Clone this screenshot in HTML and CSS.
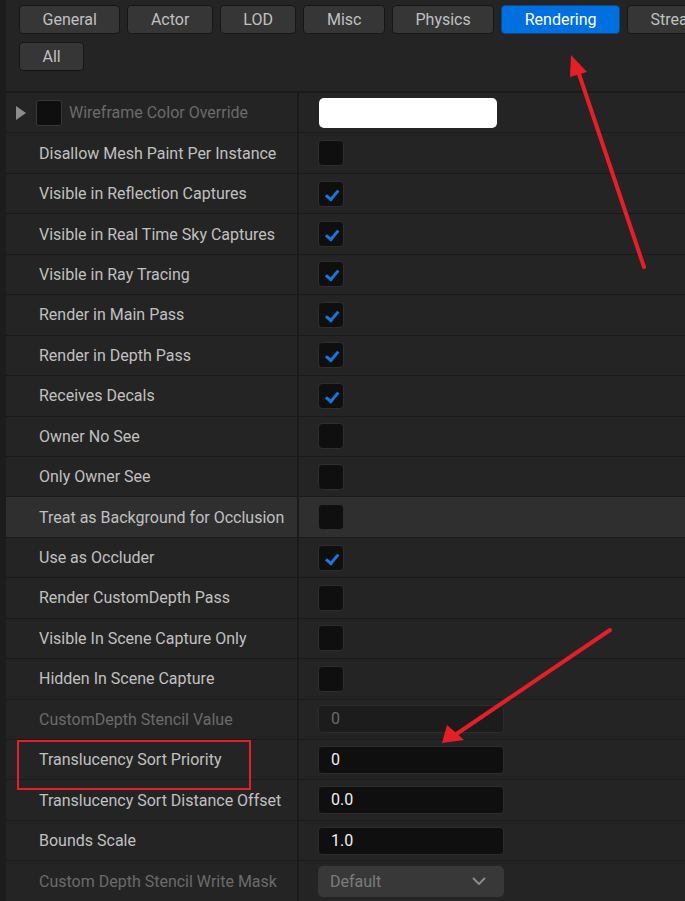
FILE: index.html
```html
<!DOCTYPE html>
<html lang="en">
<head>
    <meta charset="UTF-8">
    <meta name="viewport" content="width=device-width, initial-scale=1.0">
    <title>Details - Rendering</title>
    <link rel="stylesheet" href="styles.css">
</head>
<body>
    <div class="panel">
        <div class="tabs">
            <button class="tab">General</button>
            <button class="tab">Actor</button>
            <button class="tab">LOD</button>
            <button class="tab">Misc</button>
            <button class="tab">Physics</button>
            <button class="tab active">Rendering</button>
            <button class="tab">Streaming</button>
            <button class="tab">All</button>
        </div>

        <div class="props">
            <div class="row">
                <div class="name expandable">
                    <span class="expander"></span>
                    <span class="swatch-small"></span>
                    <span class="label disabled">Wireframe Color Override</span>
                </div>
                <div class="value"><span class="color-swatch"></span></div>
            </div>
            <div class="row">
                <div class="name"><span class="label">Disallow Mesh Paint Per Instance</span></div>
                <div class="value"><span class="check"></span></div>
            </div>
            <div class="row">
                <div class="name"><span class="label">Visible in Reflection Captures</span></div>
                <div class="value"><span class="check on"></span></div>
            </div>
            <div class="row">
                <div class="name"><span class="label">Visible in Real Time Sky Captures</span></div>
                <div class="value"><span class="check on"></span></div>
            </div>
            <div class="row">
                <div class="name"><span class="label">Visible in Ray Tracing</span></div>
                <div class="value"><span class="check on"></span></div>
            </div>
            <div class="row">
                <div class="name"><span class="label">Render in Main Pass</span></div>
                <div class="value"><span class="check on"></span></div>
            </div>
            <div class="row">
                <div class="name"><span class="label">Render in Depth Pass</span></div>
                <div class="value"><span class="check on"></span></div>
            </div>
            <div class="row">
                <div class="name"><span class="label">Receives Decals</span></div>
                <div class="value"><span class="check on"></span></div>
            </div>
            <div class="row">
                <div class="name"><span class="label">Owner No See</span></div>
                <div class="value"><span class="check"></span></div>
            </div>
            <div class="row">
                <div class="name"><span class="label">Only Owner See</span></div>
                <div class="value"><span class="check"></span></div>
            </div>
            <div class="row hover">
                <div class="name"><span class="label">Treat as Background for Occlusion</span></div>
                <div class="value"><span class="check"></span></div>
            </div>
            <div class="row">
                <div class="name"><span class="label">Use as Occluder</span></div>
                <div class="value"><span class="check on"></span></div>
            </div>
            <div class="row">
                <div class="name"><span class="label">Render CustomDepth Pass</span></div>
                <div class="value"><span class="check"></span></div>
            </div>
            <div class="row">
                <div class="name"><span class="label">Visible In Scene Capture Only</span></div>
                <div class="value"><span class="check"></span></div>
            </div>
            <div class="row">
                <div class="name"><span class="label">Hidden In Scene Capture</span></div>
                <div class="value"><span class="check"></span></div>
            </div>
            <div class="row">
                <div class="name"><span class="label disabled">CustomDepth Stencil Value</span></div>
                <div class="value"><span class="field disabled">0</span></div>
            </div>
            <div class="row">
                <div class="name"><span class="label">Translucency Sort Priority</span></div>
                <div class="value"><span class="field">0</span></div>
            </div>
            <div class="row">
                <div class="name"><span class="label">Translucency Sort Distance Offset</span></div>
                <div class="value"><span class="field">0.0</span></div>
            </div>
            <div class="row">
                <div class="name"><span class="label">Bounds Scale</span></div>
                <div class="value"><span class="field">1.0</span></div>
            </div>
            <div class="row">
                <div class="name"><span class="label disabled">Custom Depth Stencil Write Mask</span></div>
                <div class="value">
                    <span class="combo">Default
                        <svg class="chevron" width="14" height="8" viewBox="0 0 14 8"><path d="M1 1 L7 7 L13 1" fill="none" stroke="#8a8a8a" stroke-width="2"/></svg>
                    </span>
                </div>
            </div>
        </div>
    </div>

    <!-- annotation marks drawn over the screenshot -->
    <svg class="notes" width="685" height="901" viewBox="0 0 685 901">
        <line x1="644" y1="267" x2="577" y2="68" stroke="#e51f28" stroke-width="4" stroke-linecap="round"/>
        <polygon points="571,55 587,72 570,77" fill="#e51f28"/>
        <line x1="610" y1="630" x2="455" y2="735" stroke="#e51f28" stroke-width="4" stroke-linecap="round"/>
        <polygon points="442,743 447,725 464,740" fill="#e51f28"/>
        <rect x="18" y="741" width="232" height="48" fill="none" stroke="#e51f28" stroke-width="2"/>
    </svg>
</body>
</html>
```

FILE: styles.css
```css
body {
    margin: 0;
    background-color: #1c1c1c;
    font-family: 'Roboto', 'Liberation Sans', sans-serif;
    font-size: 16px;
    color: #c0c0c0;
    overflow: hidden;
    height: 901px;
    position: relative;
}

.panel {
    margin-left: 6px;
    background-color: #242424;
    height: 901px;
    overflow: hidden;
}

.tabs {
    display: flex;
    flex-wrap: wrap;
    gap: 8px 7px;
    width: 760px;
    padding: 5px 0 0 13px;
    height: 91px;
    box-sizing: border-box;
    align-content: flex-start;
}

.tab {
    height: 29px;
    padding: 0 22.5px;
    background-color: #363636;
    border: 1px solid #161616;
    border-radius: 4px;
    color: #c0c0c0;
    font-family: inherit;
    font-size: 16px;
    line-height: 27px;
    cursor: pointer;
}

.tab.active {
    background-color: #0070e0;
    border-color: #0a4a8c;
    color: #ffffff;
}

.props {
    border-top: 2px solid #1a1a1a;
}

.row {
    display: flex;
    height: 40.45px;
    box-sizing: border-box;
    border-bottom: 1px solid #1a1a1a;
}

.row.hover {
    background-color: #2f2f2f;
}

.name {
    width: 293px;
    flex: none;
    box-sizing: border-box;
    border-right: 2px solid #1a1a1a;
    display: flex;
    align-items: center;
    padding-left: 33px;
    white-space: nowrap;
}

.name.expandable {
    padding-left: 10px;
}

.label.disabled {
    color: #6b6b6b;
}

.expander {
    width: 0;
    height: 0;
    border-top: 7px solid transparent;
    border-bottom: 7px solid transparent;
    border-left: 10px solid #8c8c8c;
    margin-right: 10px;
}

.swatch-small {
    width: 26px;
    height: 26px;
    box-sizing: border-box;
    background-color: #0f0f0f;
    border: 1px solid #363636;
    border-radius: 3px;
    margin-right: 7px;
}

.value {
    flex: 1;
    display: flex;
    align-items: center;
    padding-left: 19px;
}

.color-swatch {
    width: 178px;
    height: 30px;
    background-color: #ffffff;
    border-radius: 5px;
    margin-left: 1px;
}

.check {
    width: 26px;
    height: 26px;
    box-sizing: border-box;
    background-color: #0f0f0f;
    border: 1px solid #2e2e2e;
    border-radius: 4px;
    position: relative;
}

.check.on::after {
    content: '';
    position: absolute;
    left: 7px;
    top: 5px;
    width: 5px;
    height: 10px;
    border-right: 3px solid #1778e0;
    border-bottom: 3px solid #1778e0;
    transform: rotate(40deg) translate(2px, -1px);
    transform-origin: center;
}

.field {
    width: 186px;
    height: 28px;
    box-sizing: border-box;
    background-color: #0f0f0f;
    border: 1px solid #2c2c2c;
    border-radius: 4px;
    color: #f0f0f0;
    line-height: 26px;
    padding-left: 12px;
}

.field.disabled {
    background-color: #1c1c1c;
    color: #6b6b6b;
}

.combo {
    width: 186px;
    height: 31px;
    box-sizing: border-box;
    background-color: #383838;
    border-radius: 5px;
    color: #7c7c7c;
    padding: 0 18px 0 12px;
    display: flex;
    align-items: center;
    justify-content: space-between;
}

.notes {
    position: absolute;
    left: 0;
    top: 0;
    pointer-events: none;
}
```
